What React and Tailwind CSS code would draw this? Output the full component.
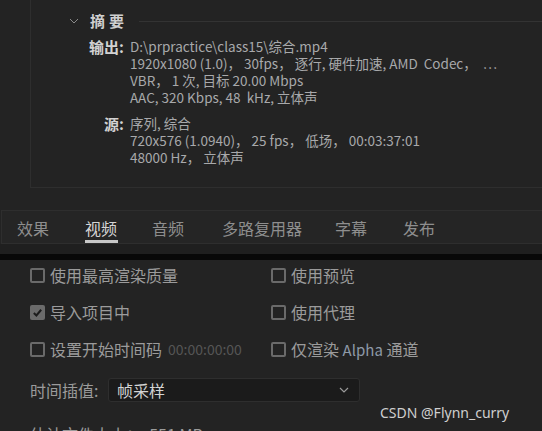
import React from "react";

const font = { fontFamily: '"Noto Sans CJK SC", "Noto Sans", sans-serif' };

function Box({ checked }) {
  if (checked) {
    return (
      <span className="w-[15px] h-[15px] rounded-[2px] bg-[#6b6b6b] flex items-center justify-center shrink-0">
        <svg width="11" height="11" viewBox="0 0 12 12">
          <path d="M2 6.5 L4.8 9.2 L10 3" fill="none" stroke="#1c1c1c" strokeWidth="2.2" />
        </svg>
      </span>
    );
  }
  return <span className="w-[15px] h-[15px] rounded-[2px] border-2 border-[#6a6a6a] bg-[#232323] shrink-0" />;
}

function Check({ checked, children }) {
  return (
    <div className="flex items-center gap-[5px] h-[20px] text-[16px] text-[#9b9b9b]">
      <Box checked={checked} />
      <span className="leading-none">{children}</span>
    </div>
  );
}

export default function App() {
  const tabs = ["效果", "视频", "音频", "多路复用器", "字幕", "发布"];
  const gaps = ["ml-[15px]", "ml-[36px]", "ml-[35px]", "ml-[38px]", "ml-[33px]", "ml-[36px]"];
  return (
    <div style={font} className="w-[542px] h-[431px] bg-[#232323] overflow-hidden relative">
      {/* summary panel */}
      <div className="h-[188px] flex">
        <div className="w-[30px] shrink-0" />
        <div className="flex-1 border-l border-b border-[#2e2e2e] h-[188px]">
          <div className="flex items-center h-[22px] mt-[10px] pl-[38px]">
            <svg width="10" height="6" viewBox="0 0 10 6" className="mr-[11px]">
              <path d="M1 1 L5 5 L9 1" fill="none" stroke="#8a8a8a" strokeWidth="1" />
            </svg>
            <span className="text-[15px] font-bold text-[#cfcfcf] tracking-[4px]">摘要</span>
            <div className="ml-[11px] h-px flex-1 bg-[#333333]" />
          </div>
          <div className="mt-[6px] flex text-[13.5px] leading-[17px] text-[#a8a9ab]">
            <div className="w-[99px] text-right font-bold text-[15px] text-[#d2d2d2] pr-[6px] shrink-0">输出:</div>
            <div className="whitespace-nowrap">
              <div>D:\prpractice\class15\综合.mp4</div>
              <div>1920x1080 (1.0)，&nbsp;30fps，&nbsp;逐行, 硬件加速, AMD&nbsp; Codec，&nbsp; …</div>
              <div>VBR，&nbsp;1 次, 目标 20.00 Mbps</div>
              <div>AAC, 320 Kbps, 48&nbsp; kHz, 立体声</div>
            </div>
          </div>
          <div className="mt-[9px] flex text-[13.5px] leading-[17px] text-[#a8a9ab]">
            <div className="w-[99px] text-right font-bold text-[15px] text-[#d2d2d2] pr-[6px] shrink-0">源:</div>
            <div className="whitespace-nowrap">
              <div>序列, 综合</div>
              <div>720x576 (1.0940)，&nbsp;25 fps，&nbsp;低场，&nbsp;00:03:37:01</div>
              <div>48000 Hz，&nbsp;立体声</div>
            </div>
          </div>
        </div>
      </div>

      <div className="h-[22px]" />

      {/* tabs */}
      <div className="h-[34px] ml-[1px] border border-r-0 border-[#2e2e2e] bg-[#252525] flex items-stretch">
        {tabs.map((t, i) => (
          <div
            key={t}
            className={
              "relative flex items-center pt-[1px] text-[16px] " +
              (i === 1 ? "text-[#d4d4d4]" : "text-[#8e8e8e]") +
              " " +
              gaps[i]
            }
          >
            {t}
            {i === 1 && <div className="absolute left-0 right-[-1px] bottom-0 h-[3px] bg-[#c8c8c8]" />}
          </div>
        ))}
      </div>
      <div className="h-[10px] bg-[#1f1f1f]" />
      <div className="h-[6px] bg-[#080808]" />

      {/* video options */}
      <div className="pl-[30px] pt-[5px] grid grid-cols-[241px_1fr] gap-y-[17px]">
        <Check>使用最高渲染质量</Check>
        <Check>使用预览</Check>
        <Check checked>导入项目中</Check>
        <Check>使用代理</Check>
        <div className="flex items-center gap-[6px]">
          <Check>设置开始时间码</Check>
          <span className="text-[14px] text-[#555555] leading-none">00:00:00:00</span>
        </div>
        <Check>
          仅渲染 <span className="text-[15px] text-[#8e9aa8]">Alpha</span> 通道
        </Check>
      </div>

      <div className="mt-[19px] pl-[30px] flex items-center">
        <span className="text-[16px] text-[#9b9b9b] w-[78px]">时间插值:</span>
        <div className="w-[252px] h-[24px] rounded-[3px] border border-[#2e2e2e] bg-[#1b1b1b] flex items-center pl-[8px] pr-[10px]">
          <span className="text-[16px] text-[#d4d4d4] flex-1">帧采样</span>
          <svg width="10" height="6" viewBox="0 0 10 6">
            <path d="M1 1 L5 5 L9 1" fill="none" stroke="#9a9a9a" strokeWidth="1.2" />
          </svg>
        </div>
      </div>

      <div className="mt-[20px] pl-[30px] text-[16px] text-[#9b9b9b] whitespace-nowrap">
        估计文件大小：&nbsp;&nbsp;551 MB
      </div>

      <div className="absolute left-[380px] top-[402px] text-[14px] text-[#cfcfcf] whitespace-nowrap" style={{ fontFamily: '"Noto Sans", sans-serif' }}>
        CSDN @Flynn_curry
      </div>
    </div>
  );
}
